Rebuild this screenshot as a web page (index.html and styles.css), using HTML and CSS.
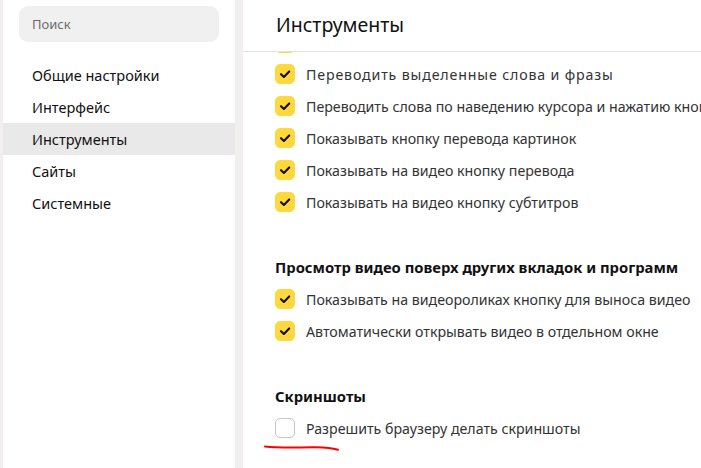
FILE: index.html
```html
<!DOCTYPE html>
<html lang="ru">
<head>
<meta charset="utf-8">
<link rel="stylesheet" href="styles.css">
</head>
<body>
<div class="page">
  <aside class="sidebar">
    <div class="search">Поиск</div>
    <nav class="nav">
      <div class="nav-item">Общие настройки</div>
      <div class="nav-item">Интерфейс</div>
      <div class="nav-item active">Инструменты</div>
      <div class="nav-item">Сайты</div>
      <div class="nav-item">Системные</div>
    </nav>
  </aside>
  <main class="main">
    <header class="header"><h1 class="title">Инструменты</h1></header>
    <div class="content">
      <div class="scroll">
        <div class="opt partial"><span class="cb on"><svg viewBox="0 0 20 20"><path d="M6 10.2l2.9 2.7L14.2 7.4"/></svg></span></div>
        <div class="opt"><span class="cb on"><svg viewBox="0 0 20 20"><path d="M6 10.2l2.9 2.7L14.2 7.4"/></svg></span><span class="lbl wide">Переводить выделенные слова и фразы</span></div>
        <div class="opt"><span class="cb on"><svg viewBox="0 0 20 20"><path d="M6 10.2l2.9 2.7L14.2 7.4"/></svg></span><span class="lbl">Переводить слова по наведению курсора и нажатию кнопки Shift</span></div>
        <div class="opt"><span class="cb on"><svg viewBox="0 0 20 20"><path d="M6 10.2l2.9 2.7L14.2 7.4"/></svg></span><span class="lbl">Показывать кнопку перевода картинок</span></div>
        <div class="opt"><span class="cb on"><svg viewBox="0 0 20 20"><path d="M6 10.2l2.9 2.7L14.2 7.4"/></svg></span><span class="lbl">Показывать на видео кнопку перевода</span></div>
        <div class="opt"><span class="cb on"><svg viewBox="0 0 20 20"><path d="M6 10.2l2.9 2.7L14.2 7.4"/></svg></span><span class="lbl">Показывать на видео кнопку субтитров</span></div>

        <h2 class="section">Просмотр видео поверх других вкладок и программ</h2>
        <div class="opt"><span class="cb on"><svg viewBox="0 0 20 20"><path d="M6 10.2l2.9 2.7L14.2 7.4"/></svg></span><span class="lbl">Показывать на видеороликах кнопку для выноса видео</span></div>
        <div class="opt"><span class="cb on"><svg viewBox="0 0 20 20"><path d="M6 10.2l2.9 2.7L14.2 7.4"/></svg></span><span class="lbl">Автоматически открывать видео в отдельном окне</span></div>

        <h2 class="section">Скриншоты</h2>
        <div class="opt marked"><span class="cb"></span><span class="lbl">Разрешить браузеру делать скриншоты</span>
          <svg class="underline" viewBox="0 0 76 10"><path d="M1 3.5C14 5 30 4.8 48 4.2C58 3.9 66 4.2 74 6.8"/></svg>
        </div>
      </div>
    </div>
  </main>
</div>
</body>
</html>
```
FILE: styles.css
```css
* { box-sizing: border-box; }
html, body { margin: 0; padding: 0; }
body {
  background: #f1f0ee;
  font-family: "Noto Sans", "Open Sans", sans-serif;
  color: #222;
  width: 701px;
  height: 468px;
  overflow: hidden;
}
.page {
  display: flex;
  height: 468px;
  padding-left: 3px;
  gap: 8px;
}
.sidebar {
  width: 232px;
  background: #fff;
  padding: 6px 16px 0 16px;
  display: flex;
  flex-direction: column;
}
.search {
  height: 36px;
  background: #f0f0f0;
  border-radius: 9px;
  padding-left: 13px;
  display: flex;
  align-items: center;
  font-size: 13px;
  color: #6b6b6b;
}
.nav {
  margin: 17px -16px 0 -16px;
  display: flex;
  flex-direction: column;
}
.nav-item {
  height: 32px;
  display: flex;
  align-items: center;
  padding-left: 29px;
  font-size: 14.5px;
  color: #111;
}
.nav-item.active { background: #e9e9e9; }
.main {
  flex: 1;
  background: #fff;
  display: flex;
  flex-direction: column;
  overflow: hidden;
  min-width: 0;
}
.header {
  height: 52px;
  border-bottom: 1px solid #e2e2e2;
  padding-left: 33px;
  display: flex;
  align-items: center;
  flex-shrink: 0;
}
.title {
  margin: 0;
  font-size: 19.5px;
  font-weight: 400;
  color: #111;
  padding-bottom: 3px;
}
.content {
  flex: 1;
  overflow: hidden;
}
.scroll {
  margin-top: -24px;
  padding-left: 32px;
}
.opt {
  height: 32px;
  display: flex;
  align-items: center;
  gap: 11px;
  white-space: nowrap;
  position: relative;
}
.opt.partial { height: 30px; }
.cb {
  width: 20px;
  height: 20px;
  border-radius: 5px;
  flex-shrink: 0;
  border: 1px solid #c6c6c6;
  background: #fff;
  display: flex;
  align-items: center;
  justify-content: center;
}
.cb.on {
  background: #ffd83d;
  border-color: #ffd83d;
}
.cb svg { width: 20px; height: 20px; flex-shrink: 0; }
.cb svg path {
  fill: none;
  stroke: #111;
  stroke-width: 2.1;
  stroke-linecap: round;
  stroke-linejoin: round;
}
.lbl {
  font-size: 14.2px;
  color: #333;
}
.lbl.wide { letter-spacing: 0.85px; }
.section {
  margin: 33px 0 0 0;
  height: 32px;
  display: flex;
  align-items: center;
  font-size: 14.8px;
  font-weight: 700;
  color: #111;
}
.underline {
  position: absolute;
  left: -11px;
  top: 31px;
  width: 76px;
  height: 10px;
}
.underline path {
  fill: none;
  stroke: #f00;
  stroke-width: 2;
  stroke-linecap: round;
}
```
